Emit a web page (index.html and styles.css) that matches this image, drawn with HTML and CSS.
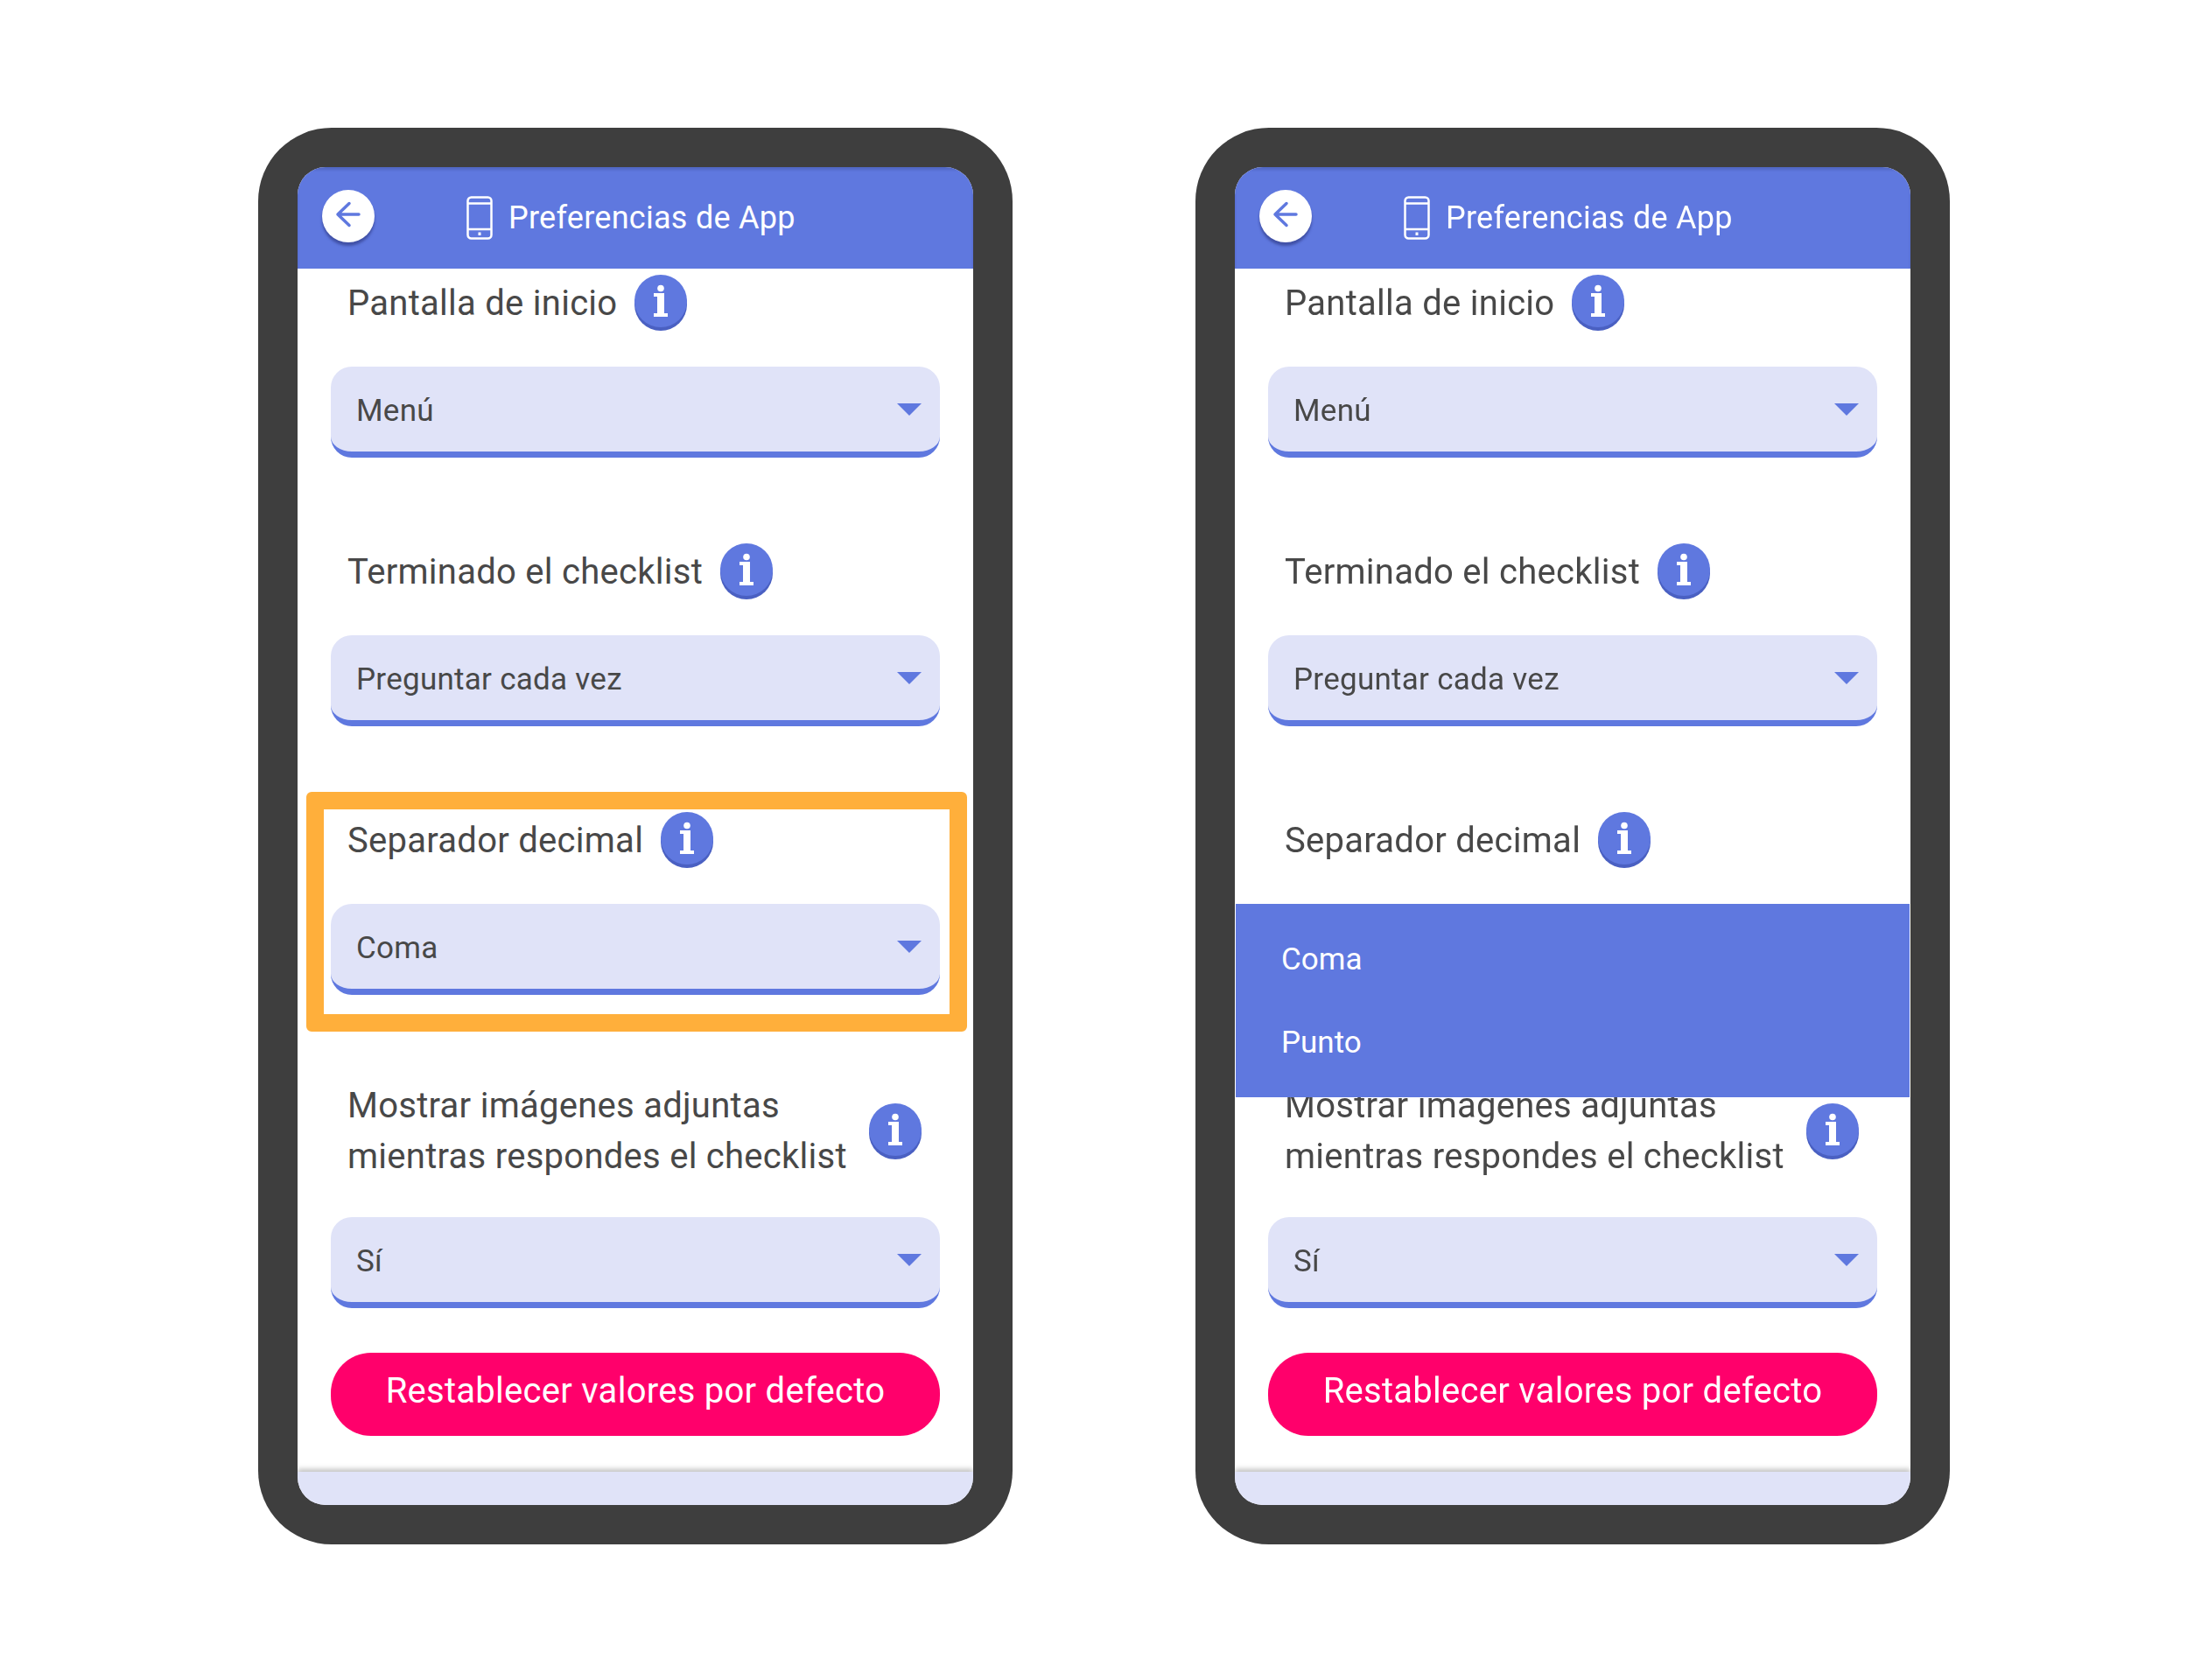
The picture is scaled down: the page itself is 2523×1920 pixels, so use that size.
FILE: index.html
```html
<!DOCTYPE html>
<html>
<head>
    <title>Preferencias de App</title>
    <link rel="stylesheet" href="styles.css">
</head>
<body>
    <svg class="defs" width="0" height="0">
        <symbol id="info" viewBox="0 0 60 64">
            <circle cx="30" cy="34" r="30" fill="#4a60c2"/>
            <circle cx="30" cy="30" r="30" fill="#5f78df"/>
            <circle cx="30" cy="15.5" r="3.8" fill="#fff"/>
            <path d="M22 21h12v23h4v4H22v-4h4V25h-4z" fill="#fff"/>
        </symbol>
        <symbol id="back" viewBox="0 0 60 60">
            <path d="M42 28H18M31 15.5 18 28l13 12.500" fill="none" stroke="#5f78df" stroke-width="3.500" stroke-linecap="round" stroke-linejoin="round"/>
        </symbol>
        <symbol id="mobile" viewBox="0 0 30 50">
            <rect x="1.500" y="1.500" width="27" height="47" rx="4" fill="none" stroke="#fff" stroke-width="2.500"/>
            <path d="M2 8.500h26M2 38h26" stroke="#fff" stroke-width="2.500"/>
            <rect x="13.500" y="41.500" width="3" height="3.500" fill="#fff"/>
        </symbol>
    </svg>

    <div class="stage">
        <div class="phone">
            <div class="screen">
                <div class="app-header">
                    <span class="back-button"><svg width="60" height="60"><use href="#back"/></svg></span>
                    <svg class="mobile-icon" width="30" height="50"><use href="#mobile"/></svg>
                    <span class="app-title">Preferencias de App</span>
                </div>
                <div class="content">
                    <div class="setting">
                        <div class="setting-label"><span>Pantalla de inicio</span><svg class="info-icon"><use href="#info"/></svg></div>
                        <div class="select"><span>Menú</span><i class="caret"></i></div>
                    </div>
                    <div class="setting">
                        <div class="setting-label"><span>Terminado el checklist</span><svg class="info-icon"><use href="#info"/></svg></div>
                        <div class="select"><span>Preguntar cada vez</span><i class="caret"></i></div>
                    </div>
                    <div class="setting">
                        <div class="highlight"></div>
                        <div class="setting-label"><span>Separador decimal</span><svg class="info-icon"><use href="#info"/></svg></div>
                        <div class="select"><span>Coma</span><i class="caret"></i></div>
                    </div>
                    <div class="setting setting-tall">
                        <div class="setting-label"><span>Mostrar imágenes adjuntas<br>mientras respondes el checklist</span><svg class="info-icon"><use href="#info"/></svg></div>
                        <div class="select"><span>Sí</span><i class="caret"></i></div>
                    </div>
                    <div class="reset-button">Restablecer valores por defecto</div>
                </div>
                <div class="app-footer"></div>
            </div>
        </div>

        <div class="phone">
            <div class="screen">
                <div class="app-header">
                    <span class="back-button"><svg width="60" height="60"><use href="#back"/></svg></span>
                    <svg class="mobile-icon" width="30" height="50"><use href="#mobile"/></svg>
                    <span class="app-title">Preferencias de App</span>
                </div>
                <div class="content">
                    <div class="setting">
                        <div class="setting-label"><span>Pantalla de inicio</span><svg class="info-icon"><use href="#info"/></svg></div>
                        <div class="select"><span>Menú</span><i class="caret"></i></div>
                    </div>
                    <div class="setting">
                        <div class="setting-label"><span>Terminado el checklist</span><svg class="info-icon"><use href="#info"/></svg></div>
                        <div class="select"><span>Preguntar cada vez</span><i class="caret"></i></div>
                    </div>
                    <div class="setting">
                        <div class="setting-label"><span>Separador decimal</span><svg class="info-icon"><use href="#info"/></svg></div>
                        <div class="select"></div>
                        <ul class="dropdown">
                            <li>Coma</li>
                            <li>Punto</li>
                        </ul>
                    </div>
                    <div class="setting setting-tall">
                        <div class="setting-label"><span>Mostrar imágenes adjuntas<br>mientras respondes el checklist</span><svg class="info-icon"><use href="#info"/></svg></div>
                        <div class="select"><span>Sí</span><i class="caret"></i></div>
                    </div>
                    <div class="reset-button">Restablecer valores por defecto</div>
                </div>
                <div class="app-footer"></div>
            </div>
        </div>
    </div>
</body>
</html>
```

FILE: styles.css
```css
body {
    font-family: Roboto, "Liberation Sans", sans-serif;
    background-color: #fff;
    margin: 0;
    padding: 0;
}
.defs {
    display: block;
    height: 0;
}
.stage {
    display: flex;
    gap: 209px;
    padding: 146px 0 0 295px;
    filter: blur(0.7px);
}
.phone {
    box-sizing: border-box;
    width: 862px;
    height: 1619px;
    padding: 45px;
    background-color: #3e3e3e;
    border-radius: 84px;
}
.screen {
    display: flex;
    flex-direction: column;
    height: 100%;
    background-color: #fff;
    border-radius: 32px;
    overflow: hidden;
}
.app-header {
    display: flex;
    align-items: center;
    flex: none;
    height: 116px;
    padding-left: 28px;
    background-color: #5f78df;
    box-shadow: inset 0 3px 3px rgba(40, 50, 110, 0.25);
}
.back-button {
    display: block;
    width: 60px;
    height: 60px;
    margin-bottom: 5px;
    background-color: #fff;
    border-radius: 50%;
    box-shadow: 0 4px 3px rgba(40, 50, 120, 0.55);
}
.back-button svg {
    display: block;
}
.mobile-icon {
    flex: none;
    margin-left: 105px;
}
.app-title {
    margin-left: 18px;
    color: #fff;
    font-size: 36px;
    letter-spacing: 0.27px;
}
.content {
    flex: 1;
    padding: 7px 38px 0;
}
.setting {
    position: relative;
    margin-bottom: 98px;
}
.setting-label {
    display: flex;
    align-items: center;
    gap: 20px;
    min-height: 64px;
    padding: 0 21px 0 19px;
    color: #484848;
    font-size: 40px;
    line-height: 58px;
    letter-spacing: 0.27px;
}
.setting-label span {
    padding-top: 2px;
}
.info-icon {
    flex: none;
    width: 60px;
    height: 64px;
}
.select {
    box-sizing: border-box;
    display: flex;
    align-items: center;
    justify-content: space-between;
    height: 104px;
    margin-top: 41px;
    padding: 0 21px 0 29px;
    background-color: #e0e3f8;
    border-bottom: 7px solid #5f78df;
    border-radius: 24px;
    color: #484848;
    font-size: 35px;
    letter-spacing: 0.27px;
}
.select span {
    padding-top: 3px;
}
.caret {
    width: 0;
    height: 0;
    border-left: 14px solid transparent;
    border-right: 14px solid transparent;
    border-top: 14px solid #5f78df;
}
.setting-tall {
    margin-bottom: 51px;
}
.setting-tall .setting-label {
    justify-content: space-between;
}
.setting-tall .setting-label span {
    padding-top: 0;
}
.setting-tall .select {
    margin-top: 40px;
}
.reset-button {
    height: 95px;
    background-color: #ff006b;
    border-radius: 46px;
    color: #fff;
    font-size: 40px;
    line-height: 87px;
    letter-spacing: 0.27px;
    text-align: center;
}
.app-footer {
    flex: none;
    height: 38px;
    background-color: #e0e3f8;
    box-shadow: 0 -3px 6px rgba(0, 0, 0, 0.25);
}
.highlight {
    position: absolute;
    top: -23px;
    left: -28px;
    right: -31px;
    height: 274px;
    box-sizing: border-box;
    border: 20px solid #ffaf3b;
    border-radius: 6px;
}
.dropdown {
    position: absolute;
    top: 105px;
    left: -37px;
    right: -37px;
    z-index: 1;
    height: 221px;
    box-sizing: border-box;
    list-style: none;
    margin: 0;
    padding: 16px 52px;
    background-color: #5f78df;
    color: #fff;
    font-size: 35px;
}
.dropdown li {
    height: 95px;
    line-height: 95px;
}
```
